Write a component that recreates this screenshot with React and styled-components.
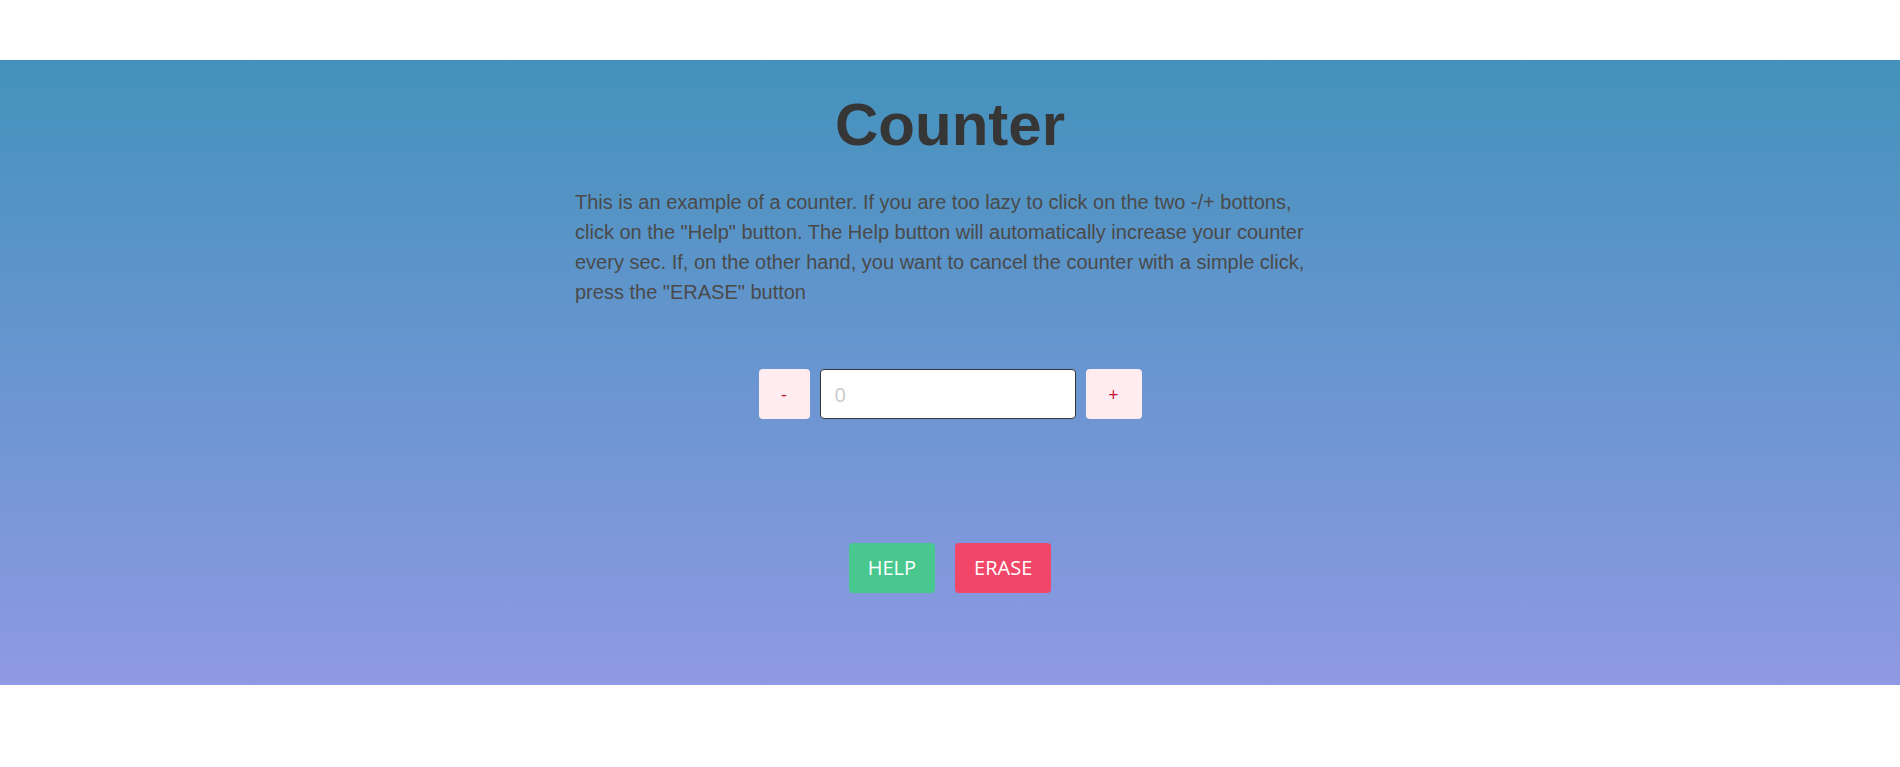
import { useState, useEffect, useRef } from "react";
import styled, { createGlobalStyle, css } from "styled-components";

const GlobalStyle = createGlobalStyle`
  * { box-sizing: border-box; }
  body {
    margin: 0;
    background: #fff;
    font-family: "Liberation Sans", Arial, sans-serif;
  }
`;

const Page = styled.div`
  padding: 60px 0 82px;
`;

const Hero = styled.section`
  background: linear-gradient(to bottom, #4392bc 0%, #8f99e4 100%);
  padding: 30px 0 92px;
  display: flex;
  flex-direction: column;
  align-items: center;
`;

const Title = styled.h1`
  margin: 0;
  font-family: "Liberation Sans", Arial, sans-serif;
  font-size: 60px;
  font-weight: 700;
  color: #363636;
  line-height: 69px;
`;

const Intro = styled.p`
  width: 750px;
  margin: 28px 0 0;
  font-size: 20px;
  line-height: 30px;
  color: #4a4a4a;
`;

const CounterRow = styled.div`
  display: flex;
  gap: 10px;
  margin-top: 62px;
`;

const Actions = styled.div`
  display: flex;
  gap: 20px;
  margin-top: 124px;
`;

const Button = styled.button`
  height: 50px;
  padding: 0 18px;
  border: 1px solid transparent;
  border-radius: 4px;
  font-family: "Open Sans", "Noto Sans", sans-serif;
  font-size: 20px;
  line-height: 1;
  cursor: pointer;
  display: inline-flex;
  align-items: center;
  justify-content: center;

  ${({ $variant }) => {
    switch ($variant) {
      case "success":
        return css`
          background: #48c78e;
          color: #fff;
        `;
      case "danger":
        return css`
          background: #f14668;
          color: #fff;
        `;
      default:
        return css`
          background: #feecf0;
          color: #cc0f35;
          font-size: 18px;
          width: ${(p) => p.$w}px;
          padding: 0;
        `;
    }
  }}
`;

const CountInput = styled.input`
  width: 256px;
  height: 50px;
  padding: 0 14px;
  border: 1px solid #363636;
  border-radius: 4px;
  background: #fff;
  font-family: "Open Sans", "Noto Sans", sans-serif;
  font-size: 20px;
  color: #363636;
  outline: none;

  &::placeholder {
    color: rgba(54, 54, 54, 0.3);
  }
`;

export default function App() {
  const [count, setCount] = useState(0);
  const [helping, setHelping] = useState(false);
  const timer = useRef(null);

  useEffect(() => {
    if (helping) {
      timer.current = setInterval(() => setCount((c) => c + 1), 1000);
    }
    return () => clearInterval(timer.current);
  }, [helping]);

  return (
    <>
      <GlobalStyle />
      <Page>
        <Hero>
          <Title>Counter</Title>
          <Intro>
            This is an example of a counter. If you are too lazy to click on the
            two -/+ bottons, click on the "Help" button. The Help button will
            automatically increase your counter every sec. If, on the other hand,
            you want to cancel the counter with a simple click, press the "ERASE"
            button
          </Intro>
          <CounterRow>
            <Button $w={51} onClick={() => setCount((c) => c - 1)}>-</Button>
            <CountInput
              placeholder="0"
              value={count === 0 ? "" : count}
              onChange={(e) => setCount(Number(e.target.value) || 0)}
            />
            <Button $w={56} onClick={() => setCount((c) => c + 1)}>+</Button>
          </CounterRow>
          <Actions>
            <Button $variant="success" onClick={() => setHelping(true)}>HELP</Button>
            <Button
              $variant="danger"
              onClick={() => {
                setHelping(false);
                setCount(0);
              }}
            >
              ERASE
            </Button>
          </Actions>
        </Hero>
      </Page>
    </>
  );
}
